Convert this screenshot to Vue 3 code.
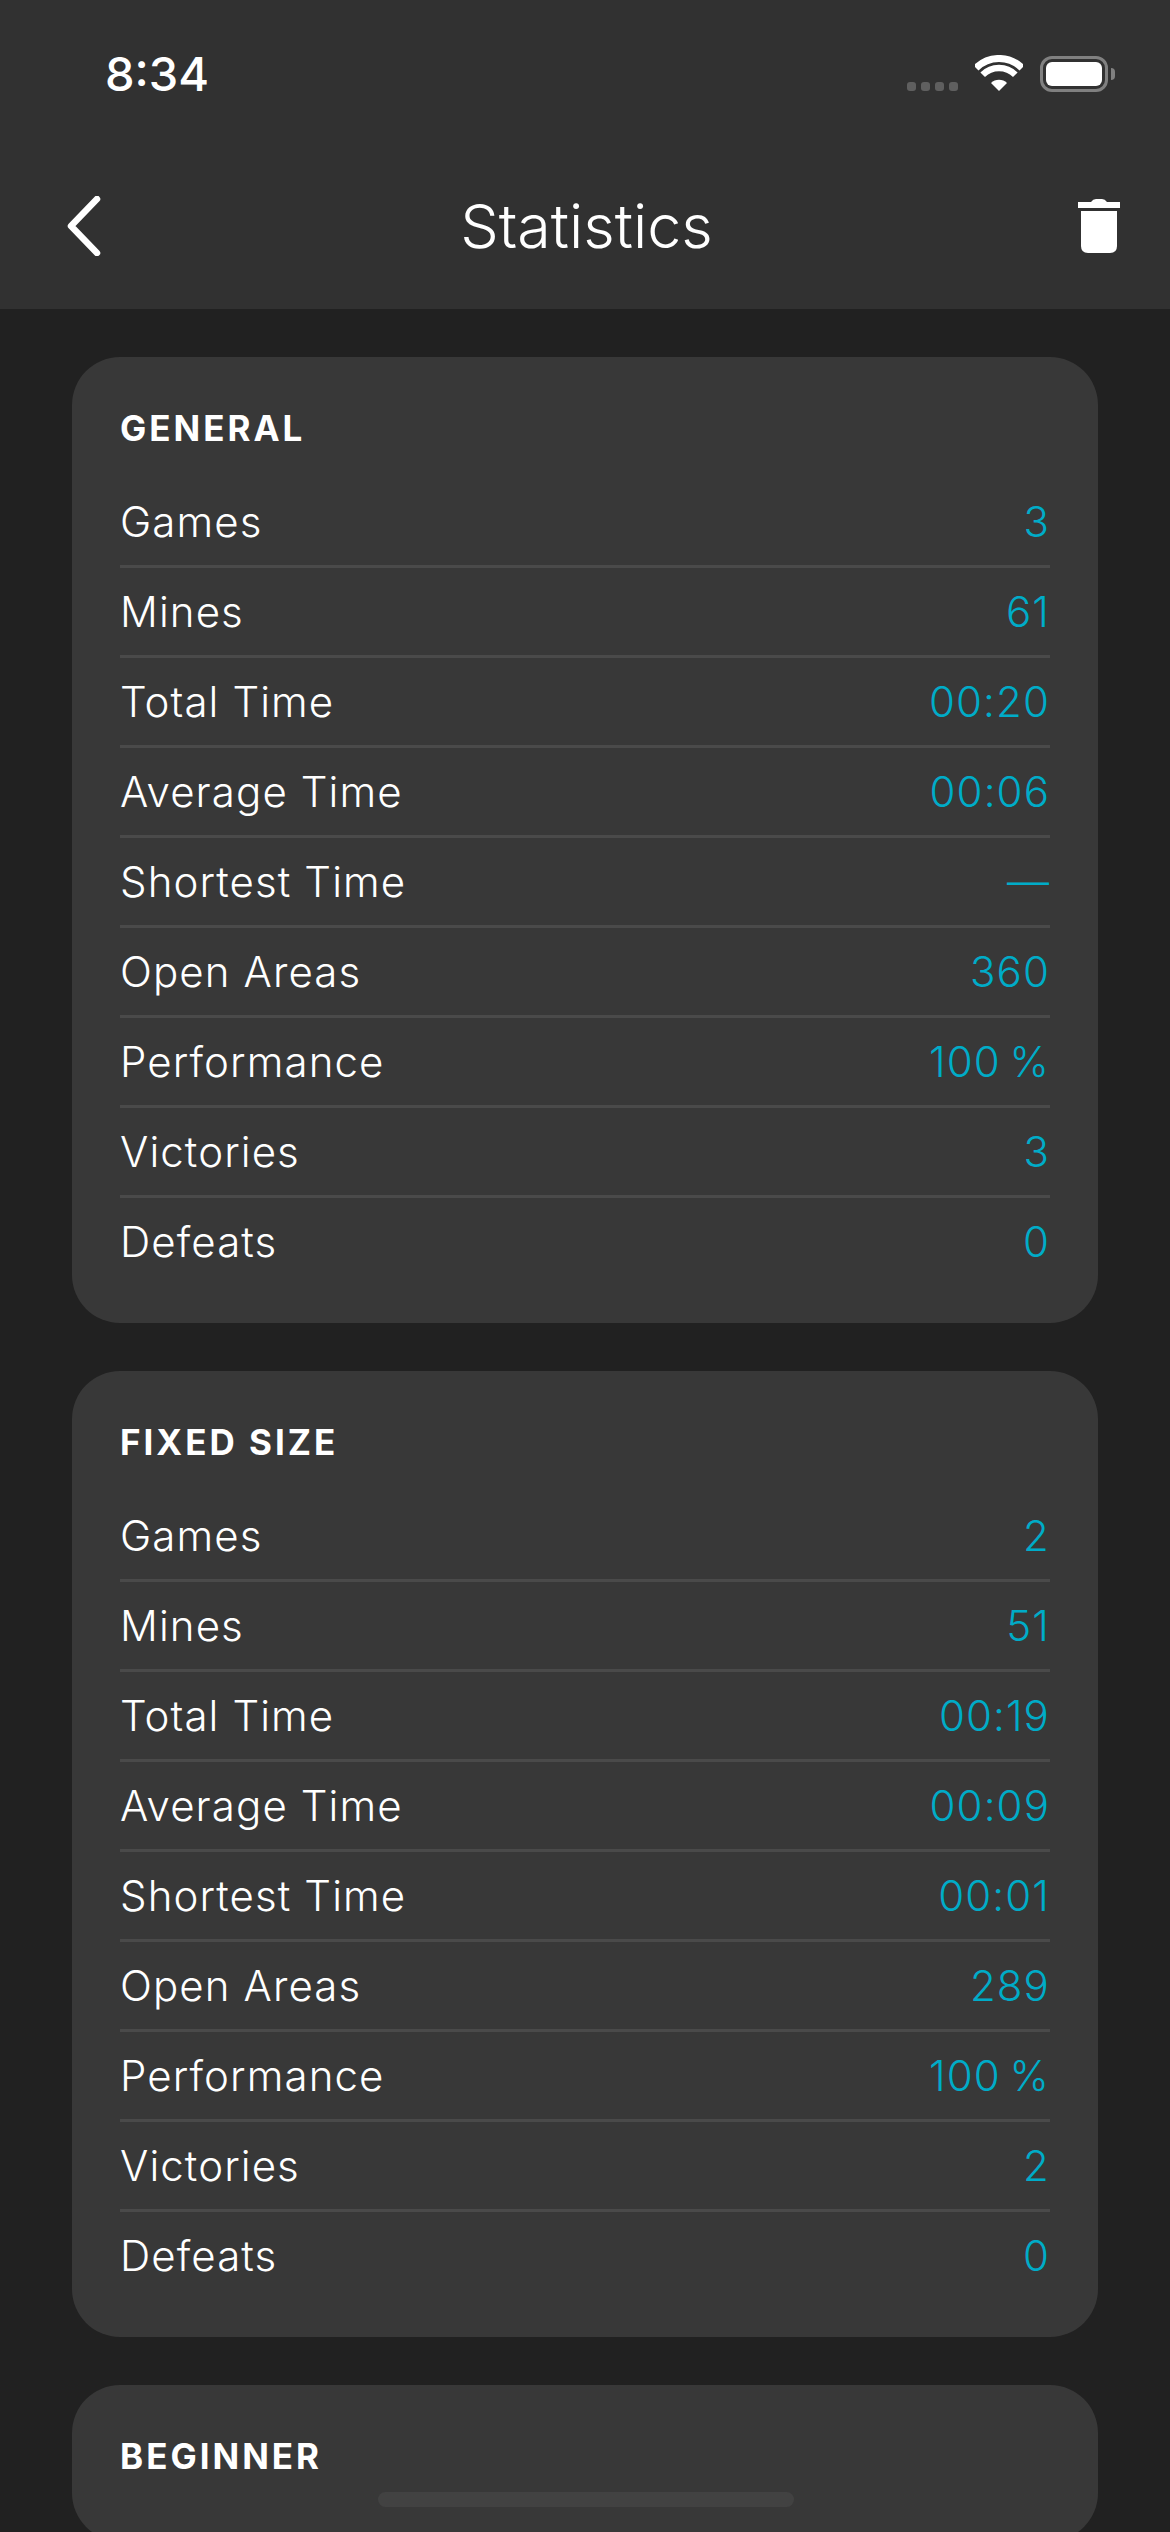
<script setup>
const sections = [
  {
    title: "GENERAL",
    rows: [
      ["Games", "3"],
      ["Mines", "61"],
      ["Total Time", "00:20"],
      ["Average Time", "00:06"],
      ["Shortest Time", "—"],
      ["Open Areas", "360"],
      ["Performance", "100\u2009%"],
      ["Victories", "3"],
      ["Defeats", "0"],
    ],
  },
  {
    title: "FIXED SIZE",
    rows: [
      ["Games", "2"],
      ["Mines", "51"],
      ["Total Time", "00:19"],
      ["Average Time", "00:09"],
      ["Shortest Time", "00:01"],
      ["Open Areas", "289"],
      ["Performance", "100\u2009%"],
      ["Victories", "2"],
      ["Defeats", "0"],
    ],
  },
  {
    title: "BEGINNER",
    rows: [],
  },
];
</script>

<template>
  <div class="screen">
    <header class="top">
      <div class="status">
        <span class="time">8:34</span>
        <div class="status-icons">
          <div class="signal"><i></i><i></i><i></i><i></i></div>
          <svg class="wifi" width="48" height="36" viewBox="0 0 48 36">
            <path d="M1 13 A32.5 32.5 0 0 1 47 13" fill="none" stroke="#fff" stroke-width="7" />
            <path d="M7.7 19.7 A23 23 0 0 1 40.3 19.7" fill="none" stroke="#fff" stroke-width="6.5" />
            <path d="M24 36 L16 28 A11.3 11.3 0 0 1 32 28 Z" fill="#fff" />
          </svg>
          <div class="battery"><div class="battery-fill"></div></div>
          <div class="battery-nub"></div>
        </div>
      </div>
      <nav class="nav">
        <svg class="back" width="36" height="60" viewBox="0 0 36 60">
          <path d="M32 3 L6 30 L32 57" fill="none" stroke="#fff" stroke-width="6.5" stroke-linecap="round" stroke-linejoin="round" />
        </svg>
        <h1>Statistics</h1>
        <svg class="trash" width="42" height="54" viewBox="0 0 42 54">
          <path d="M0 3 H13 Q15 0 18 0 H24 Q27 0 29 3 H42 V9 H0 Z" fill="#fff" />
          <path d="M3 12 H39 V47 Q39 54 32 54 H10 Q3 54 3 47 Z" fill="#fff" />
        </svg>
      </nav>
    </header>

    <main class="content">
      <section v-for="section in sections" :key="section.title" class="card">
        <h2>{{ section.title }}</h2>
        <div v-for="row in section.rows" :key="row[0]" class="row">
          <span>{{ row[0] }}</span>
          <span class="value">{{ row[1] }}</span>
        </div>
      </section>
    </main>

    <div class="home-bar"></div>
  </div>
</template>

<style scoped>
.screen {
  position: relative;
  width: 1170px;
  height: 2532px;
  overflow: hidden;
  background: #212121;
  color: #fff;
  font-family: Inter, "Liberation Sans", sans-serif;
}

.top {
  height: 309px;
  background: #313131;
}

.status {
  display: flex;
  align-items: flex-start;
  justify-content: space-between;
  height: 191px;
  padding: 50px 55px 0 105px;
  box-sizing: border-box;
}

.time {
  font-size: 47px;
  font-weight: 500;
  line-height: 48px;
}

.status-icons {
  display: flex;
  align-items: flex-end;
  height: 37px;
  margin-top: 5px;
}

.signal {
  display: flex;
  gap: 5px;
  margin-right: 17px;
  margin-bottom: 1px;
}

.signal i {
  width: 9px;
  height: 9px;
  border-radius: 3px;
  background: #5f5f5f;
}

.wifi {
  margin-right: 17px;
  margin-bottom: 1px;
}

.battery {
  box-sizing: border-box;
  width: 68px;
  height: 36px;
  padding: 3px;
  border: 3px solid #808080;
  border-radius: 12px;
}

.battery-fill {
  height: 100%;
  border-radius: 6px;
  background: #fff;
}

.battery-nub {
  align-self: center;
  width: 4px;
  height: 12px;
  margin-left: 3px;
  border-radius: 0 4px 4px 0;
  background: #808080;
}

.nav {
  display: flex;
  align-items: center;
  justify-content: space-between;
  padding: 0 50px 0 65px;
}

.nav h1 {
  margin: 0 0 0 -6px;
  font-size: 61px;
  font-weight: 300;
  line-height: 70px;
}

.content {
  display: flex;
  flex-direction: column;
  gap: 48px;
  padding: 48px 72px 0;
}

.card {
  padding: 51px 48px 35px;
  border-radius: 48px;
  background: #383838;
}

.card h2 {
  margin: 0 0 29px;
  font-size: 35px;
  font-weight: 700;
  line-height: 41px;
  letter-spacing: 3px;
}

.row {
  display: flex;
  align-items: center;
  justify-content: space-between;
  box-sizing: border-box;
  height: 90px;
  border-bottom: 3px solid #4a4a4a;
  font-size: 42px;
  font-weight: 300;
  letter-spacing: 1.1px;
}

.row:last-child {
  border-bottom-color: transparent;
}

.value {
  color: #00acc8;
}

.home-bar {
  position: absolute;
  left: 378px;
  bottom: 25px;
  width: 416px;
  height: 15px;
  border-radius: 8px;
  background: #424242;
}
</style>
